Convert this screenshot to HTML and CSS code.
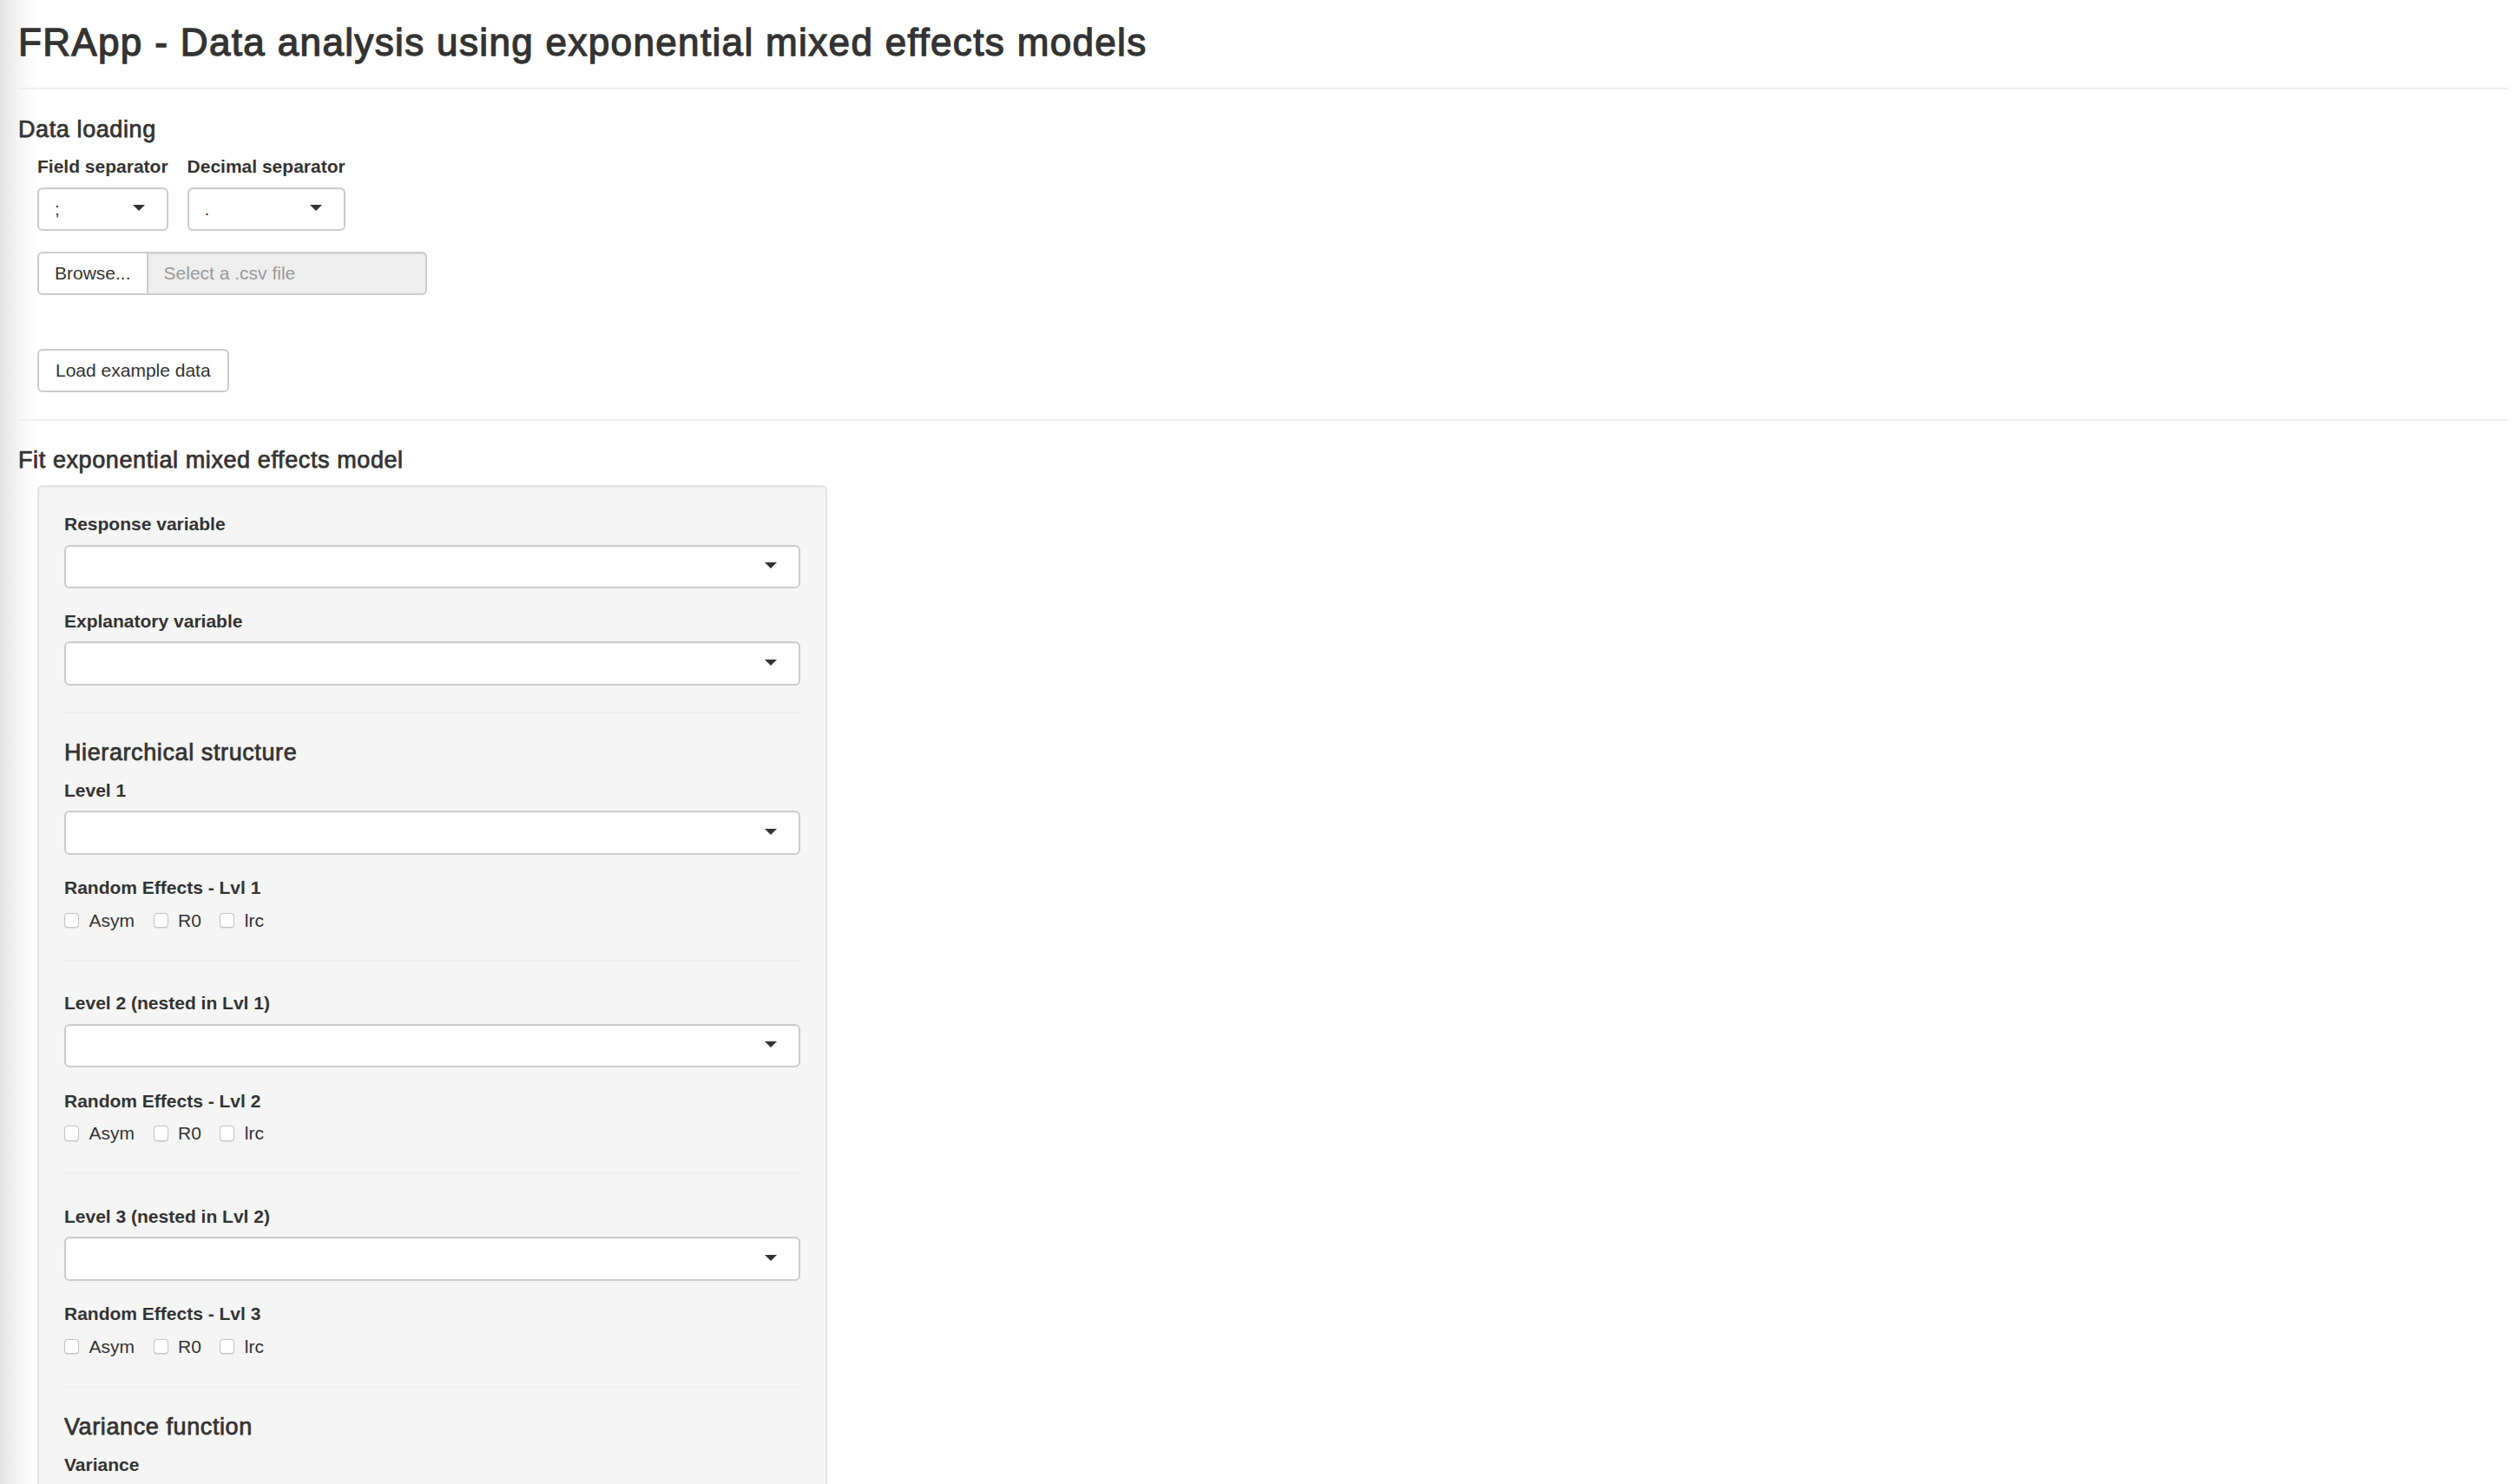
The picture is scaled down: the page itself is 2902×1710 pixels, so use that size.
FILE: index.html
```html
<!DOCTYPE html>
<html lang="en">
<head>
<meta charset="utf-8">
<title>FRApp</title>
<link rel="stylesheet" href="styles.css">
</head>
<body>
<div class="page">
  <h1 class="app-title">FRApp - Data analysis using exponential mixed effects models</h1>
  <hr class="rule">

  <h4 class="section-title">Data loading</h4>
  <div class="indent">
    <div class="sep-row">
      <div class="field">
        <label class="ctl-label">Field separator</label>
        <div class="select"><span class="select-value">;</span><span class="caret"></span></div>
      </div>
      <div class="field">
        <label class="ctl-label">Decimal separator</label>
        <div class="select"><span class="select-value">.</span><span class="caret"></span></div>
      </div>
    </div>
    <div class="file-group">
      <button class="btn btn-browse" type="button">Browse...</button>
      <div class="file-name">Select a .csv file</div>
    </div>
    <button class="btn btn-load" type="button">Load example data</button>
  </div>

  <hr class="rule rule-top">
  <h4 class="section-title">Fit exponential mixed effects model</h4>
  <div class="indent">
    <div class="well">
      <div class="form-group">
        <label class="ctl-label">Response variable</label>
        <div class="select select-wide"><span class="select-value"></span><span class="caret"></span></div>
      </div>
      <div class="form-group">
        <label class="ctl-label">Explanatory variable</label>
        <div class="select select-wide"><span class="select-value"></span><span class="caret"></span></div>
      </div>
      <hr class="rule rule-well">

      <h4 class="section-title well-title">Hierarchical structure</h4>
      <div class="level">
        <label class="ctl-label">Level 1</label>
        <div class="select select-wide level-select"><span class="select-value"></span><span class="caret"></span></div>
        <label class="ctl-label re-label">Random Effects - Lvl 1</label>
        <div class="checks">
          <label class="check"><span class="box"></span>Asym</label>
          <label class="check"><span class="box"></span>R0</label>
          <label class="check"><span class="box"></span>lrc</label>
        </div>
      </div>
      <hr class="rule rule-well">

      <div class="level">
        <label class="ctl-label">Level 2 (nested in Lvl 1)</label>
        <div class="select select-wide level-select"><span class="select-value"></span><span class="caret"></span></div>
        <label class="ctl-label re-label">Random Effects - Lvl 2</label>
        <div class="checks">
          <label class="check"><span class="box"></span>Asym</label>
          <label class="check"><span class="box"></span>R0</label>
          <label class="check"><span class="box"></span>lrc</label>
        </div>
      </div>
      <hr class="rule rule-well">

      <div class="level">
        <label class="ctl-label">Level 3 (nested in Lvl 2)</label>
        <div class="select select-wide level-select"><span class="select-value"></span><span class="caret"></span></div>
        <label class="ctl-label re-label">Random Effects - Lvl 3</label>
        <div class="checks">
          <label class="check"><span class="box"></span>Asym</label>
          <label class="check"><span class="box"></span>R0</label>
          <label class="check"><span class="box"></span>lrc</label>
        </div>
      </div>
      <hr class="rule rule-well">

      <h4 class="section-title well-title">Variance function</h4>
      <div class="level">
        <label class="ctl-label">Variance</label>
        <div class="select select-wide level-select"><span class="select-value"></span><span class="caret"></span></div>
      </div>
    </div>
  </div>
</div>
</body>
</html>
```

FILE: styles.css
```css
html {
  overflow: hidden;
}

body {
  margin: 0;
  font-family: "Liberation Sans", Arial, Helvetica, sans-serif;
  font-size: 21px;
  color: #333333;
  background-color: #ffffff;
  background-image: linear-gradient(to right, #e2e2e2 0px, #eeeeee 12px, #f7f7f7 26px, #fdfdfd 38px, #ffffff 46px);
  background-repeat: no-repeat;
  background-size: 46px 100%;
  min-height: 1710px;
}

.page {
  padding: 24px 12px 0 21px;
}

.app-title {
  margin: 0;
  font-size: 44px;
  line-height: 49px;
  font-weight: 400;
  letter-spacing: 1.35px;
  -webkit-text-stroke: 1.3px #333333;
  color: #333333;
}

.rule {
  height: 0;
  border: 0;
  border-top: 2px solid #eeeeee;
  margin: 28px 0 30.5px;
}

.rule-top {
  margin-top: 30.5px;
}

.section-title {
  margin: 0 0 13.5px;
  font-size: 27px;
  line-height: 30px;
  font-weight: 400;
  letter-spacing: 0.6px;
  -webkit-text-stroke: 0.75px #333333;
}

.indent {
  padding-left: 22px;
}

.ctl-label {
  display: block;
  font-weight: 700;
  font-size: 21px;
  line-height: 30px;
  margin-bottom: 8.5px;
}

.sep-row {
  display: flex;
  gap: 22px;
  align-items: flex-start;
}

.field {
  display: flex;
  flex-direction: column;
}

.select {
  box-sizing: border-box;
  height: 50px;
  display: flex;
  align-items: center;
  justify-content: space-between;
  padding: 0 25px 0 18px;
  background: #ffffff;
  border: 2px solid #cccccc;
  border-radius: 6px;
  box-shadow: inset 0 1px 1px rgba(0, 0, 0, 0.05);
  font-size: 21px;
  line-height: 30px;
}

.select-wide {
  width: 100%;
  height: 50.5px;
}

.select-value {
  white-space: pre;
}

.caret {
  width: 0;
  height: 0;
  border-left: 7px solid transparent;
  border-right: 7px solid transparent;
  border-top: 7.5px solid #333333;
  margin-top: -2px;
}

.file-group {
  display: flex;
  width: 449px;
  height: 50px;
  margin-top: 24.5px;
}

.btn {
  box-sizing: border-box;
  height: 50px;
  font-family: "Liberation Sans", Arial, Helvetica, sans-serif;
  font-size: 21px;
  line-height: 30px;
  color: #333333;
  background: #ffffff;
  border: 2px solid #cccccc;
  border-radius: 6px;
  padding: 0 18px;
  cursor: pointer;
}

.btn-browse {
  border-radius: 6px 0 0 6px;
  flex: none;
}

.file-name {
  flex: 1;
  box-sizing: border-box;
  height: 50px;
  display: flex;
  align-items: center;
  padding: 0 18px;
  background: #eeeeee;
  border: 2px solid #cccccc;
  border-left: 0;
  border-radius: 0 6px 6px 0;
  box-shadow: inset 0 1px 1px rgba(0, 0, 0, 0.075);
  color: #999999;
}

.btn-load {
  display: block;
  margin-top: 62px;
  padding: 0 19px;
}

.well {
  box-sizing: border-box;
  width: 910px;
  min-height: 1300px;
  padding: 28.5px 29px;
  background: #f5f5f5;
  border: 2px solid #e4e4e4;
  border-radius: 6px;
  box-shadow: inset 0 1px 1px rgba(0, 0, 0, 0.05);
}

.form-group {
  margin-bottom: 22.5px;
}

.rule-well {
  margin: 30px 0 30.5px;
}

.well-title {
  margin-bottom: 10.5px;
}

.level {
  padding-top: 3px;
}

.level-select {
  margin-bottom: 23.5px;
}

.re-label {
  margin-bottom: 7.5px;
}

.checks {
  display: flex;
  align-items: center;
  height: 30px;
  line-height: 30px;
  font-size: 21px;
}

.check {
  display: inline-flex;
  align-items: center;
}

.check + .check {
  margin-left: 21.5px;
}

.box {
  box-sizing: border-box;
  width: 17px;
  height: 17.5px;
  margin-right: 11.5px;
  background: #ffffff;
  border: 1px solid #c4c4c4;
  border-radius: 4px;
  box-shadow: 0 0.5px 1px rgba(0, 0, 0, 0.1);
}
```
